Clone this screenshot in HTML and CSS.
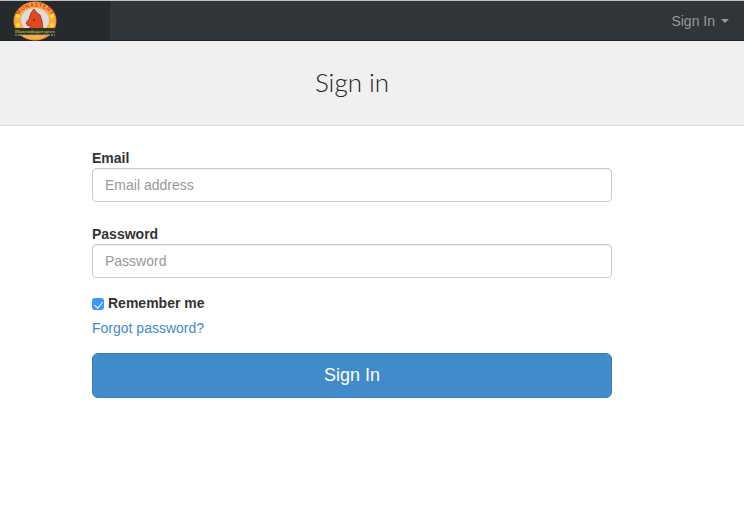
FILE: index.html
```html
<!DOCTYPE html>
<html lang="en">
<head>
    <meta charset="UTF-8">
    <meta name="viewport" content="width=device-width, initial-scale=1.0">
    <title>Sign in</title>
    <link rel="stylesheet" href="styles.css">
</head>
<body>
    <nav class="navbar">
        <a class="brand" href="#" aria-label="Home">
            <svg class="logo" width="48" height="40" viewBox="0 0 48 40">
                <ellipse cx="24" cy="20" rx="21" ry="19" fill="#fcaa48" stroke="#f0963a" stroke-width="1"/>
                <path id="arc" d="M9 13A16 11 0 0 1 39 13" fill="none"/>
                <text class="logo-arc"><textPath href="#arc" startOffset="50%" text-anchor="middle">MONASTERY</textPath></text>
                <ellipse cx="24" cy="19" rx="14" ry="12" fill="#dcdcda"/>
                <g fill="#ffe712">
                    <circle cx="7" cy="15" r="2"/>
                    <circle cx="41" cy="15" r="2"/>
                    <circle cx="7" cy="24" r="2"/>
                    <circle cx="41" cy="24" r="2"/>
                </g>
                <path d="M23 8L25 11L29 14L31 20L32 28H18L20 24L17 25L15 22L18 18L20 12Z" fill="#e2481c" stroke="#a04030" stroke-width="1"/>
                <circle cx="23" cy="19" r="1" fill="#5a2a20"/>
                <path d="M4 27H44L42 34H6Z" fill="#30322f"/>
                <text class="logo-name" x="24" y="32" text-anchor="middle">Dhanvanthagari xpress</text>
                <path d="M4 34H44" stroke="#a9a9ab" stroke-width="1" stroke-dasharray="2 1 4 1 3 1"/>
            </svg>
        </a>
        <button class="menu" type="button">Sign In <span class="caret"></span></button>
    </nav>

    <header class="page-header">
        <h1>Sign in</h1>
    </header>

    <main class="content">
        <form class="signin">
            <div class="form-group">
                <label for="email">Email</label>
                <input class="form-control" type="email" id="email" placeholder="Email address">
            </div>
            <div class="form-group">
                <label for="password">Password</label>
                <input class="form-control" type="password" id="password" placeholder="Password">
            </div>
            <div class="remember">
                <input type="checkbox" id="remember" checked>
                <label for="remember">Remember me</label>
            </div>
            <a class="forgot" href="#">Forgot password?</a>
            <button class="btn" type="submit">Sign In</button>
        </form>
    </main>
</body>
</html>
```
FILE: styles.css
```css
* {
    box-sizing: border-box;
}
body {
    margin: 0;
    font-family: "Liberation Sans", Arial, sans-serif;
    font-size: 14px;
    line-height: 20px;
    color: #333;
    background-color: #fff;
}
.navbar {
    display: flex;
    justify-content: space-between;
    align-items: stretch;
    height: 41px;
    border-top: 1px solid #b9bfc1;
    border-bottom: 1px solid #212528;
    background-color: #303539;
}
.brand {
    width: 110px;
    padding-left: 11px;
    background-color: #262a2d;
}
.logo {
    display: block;
}
.logo-arc {
    font-size: 6px;
    font-weight: bold;
    fill: #e3371e;
}
.logo-name {
    font-family: "Liberation Serif", serif;
    font-size: 4px;
    font-weight: bold;
    fill: #b8b000;
}
.menu {
    display: flex;
    align-items: center;
    gap: 6px;
    padding: 0 15px;
    border: 0;
    background: none;
    font-family: inherit;
    font-size: 14px;
    color: #999;
    cursor: pointer;
}
.caret {
    border-top: 4px solid #999;
    border-left: 4px solid transparent;
    border-right: 4px solid transparent;
}
.page-header {
    padding: 23px 40px 24px 0;
    border-bottom: 1px solid #ddd;
    background-color: #f0f0f0;
    text-align: center;
}
.page-header h1 {
    margin: 0;
    font-family: Lato, sans-serif;
    font-size: 26px;
    font-weight: 300;
    line-height: 37px;
    color: #222;
}
.content {
    padding: 22px 40px 22px 0;
}
.signin {
    display: flex;
    flex-direction: column;
    max-width: 520px;
    margin: 0 auto;
}
.form-group {
    margin-bottom: 22px;
}
label {
    font-weight: bold;
}
.form-group label {
    display: block;
}
.form-control {
    display: block;
    width: 100%;
    height: 34px;
    padding: 6px 12px;
    border: 1px solid #ccc;
    border-radius: 4px;
    background-color: #fff;
    box-shadow: inset 0 1px 1px rgba(0, 0, 0, 0.075);
    font-family: inherit;
    font-size: 14px;
    color: #555;
}
.form-control::placeholder {
    color: #999;
}
.remember {
    display: flex;
    align-items: center;
    gap: 4px;
    margin: -7px 0 5px;
}
.remember input {
    appearance: none;
    display: flex;
    justify-content: center;
    align-items: flex-start;
    width: 12px;
    height: 12px;
    margin: 1px 0 0;
    padding-top: 2px;
    border-radius: 3px;
    background-color: #3b99fc;
}
.remember input:checked::after {
    content: "";
    width: 4px;
    height: 7px;
    border: solid #fff;
    border-width: 0 1px 1px 0;
    transform: rotate(40deg);
}
.forgot {
    align-self: flex-start;
    color: #428bca;
    text-decoration: none;
}
.btn {
    height: 45px;
    margin-top: 15px;
    border: 1px solid #357ebd;
    border-radius: 6px;
    background-color: #428bca;
    font-family: inherit;
    font-size: 18px;
    color: #fff;
    cursor: pointer;
}
```
